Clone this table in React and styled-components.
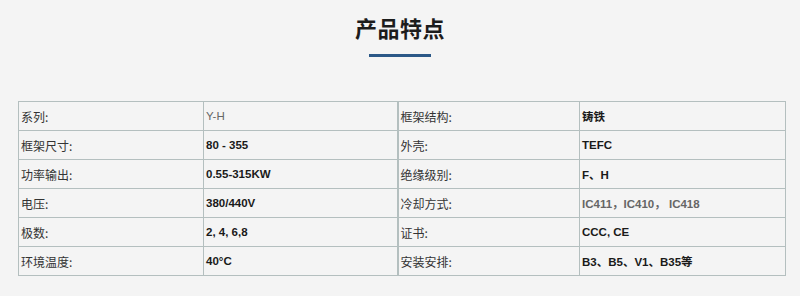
import React from 'react'
import styled, { createGlobalStyle } from 'styled-components'

const GlobalStyle = createGlobalStyle`
  html, body {
    margin: 0;
    padding: 0;
    background: #f4f4f4;
  }
  body {
    font-family: "Liberation Sans", "Noto Sans CJK SC", sans-serif;
  }
`

const Page = styled.div`
  width: 800px;
  height: 296px;
  overflow: hidden;
  background: #f4f4f4;
`

const Header = styled.div`
  display: flex;
  flex-direction: column;
  align-items: center;
  padding-top: 12px;
  height: 101px;
  box-sizing: border-box;
`

const Title = styled.h2`
  margin: 0;
  font-family: "Noto Sans CJK SC", sans-serif;
  font-size: 22px;
  line-height: 30px;
  font-weight: 700;
  color: #1c1c1c;
  letter-spacing: 0.5px;
`

const Bar = styled.div`
  width: 62px;
  height: 3px;
  margin-top: 12px;
  background: #2b5887;
`

const Table = styled.table`
  margin-left: 18px;
  width: 767px;
  border-collapse: collapse;
  table-layout: fixed;
`

const Cell = styled.td`
  height: 28px;
  padding: 0 2px;
  border: 1px solid #b4bfbf;
  border-left-width: ${p => (p.$split ? '2px' : '1px')};
  font-size: ${p => (p.$label ? '12px' : '11.5px')};
  vertical-align: middle;
  font-family: ${p => (p.$label ? '"Noto Sans CJK SC", sans-serif' : '"Liberation Sans", "Noto Sans CJK SC", sans-serif')};
  font-weight: ${p => (p.$bold ? 700 : 400)};
  color: ${p => p.$tone || '#333'};
  white-space: nowrap;
`

const rows = [
  ['系列:', { text: 'Y-H', tone: '#666', bold: false }, '框架结构:', { text: '铸铁' }],
  ['框架尺寸:', { text: '80 - 355' }, '外壳:', { text: 'TEFC' }],
  ['功率输出:', { text: '0.55-315KW' }, '绝缘级别:', { text: 'F、H' }],
  ['电压:', { text: '380/440V' }, '冷却方式:', { text: 'IC411，IC410， IC418', tone: '#666' }],
  ['极数:', { text: '2, 4, 6,8' }, '证书:', { text: 'CCC, CE' }],
  ['环境温度:', { text: '40°C' }, '安装安排:', { text: 'B3、B5、V1、B35等' }]
]

const Value = ({ v, split }) =>
  <Cell $bold={v.bold !== false} $tone={v.tone || '#1a1a1a'} $split={split}>
    {v.text}
  </Cell>

const App = () =>
  <Page>
    <GlobalStyle />
    <Header>
      <Title>产品特点</Title>
      <Bar />
    </Header>
    <Table>
      <colgroup>
        <col style={{ width: 185 }} />
        <col style={{ width: 194 }} />
        <col style={{ width: 182 }} />
        <col style={{ width: 206 }} />
      </colgroup>
      <tbody>
        {rows.map((r, i) =>
          <tr key={i}>
            <Cell $label>{r[0]}</Cell>
            <Value v={r[1]} />
            <Cell $label $split>{r[2]}</Cell>
            <Value v={r[3]} />
          </tr>
        )}
      </tbody>
    </Table>
  </Page>

export default App
